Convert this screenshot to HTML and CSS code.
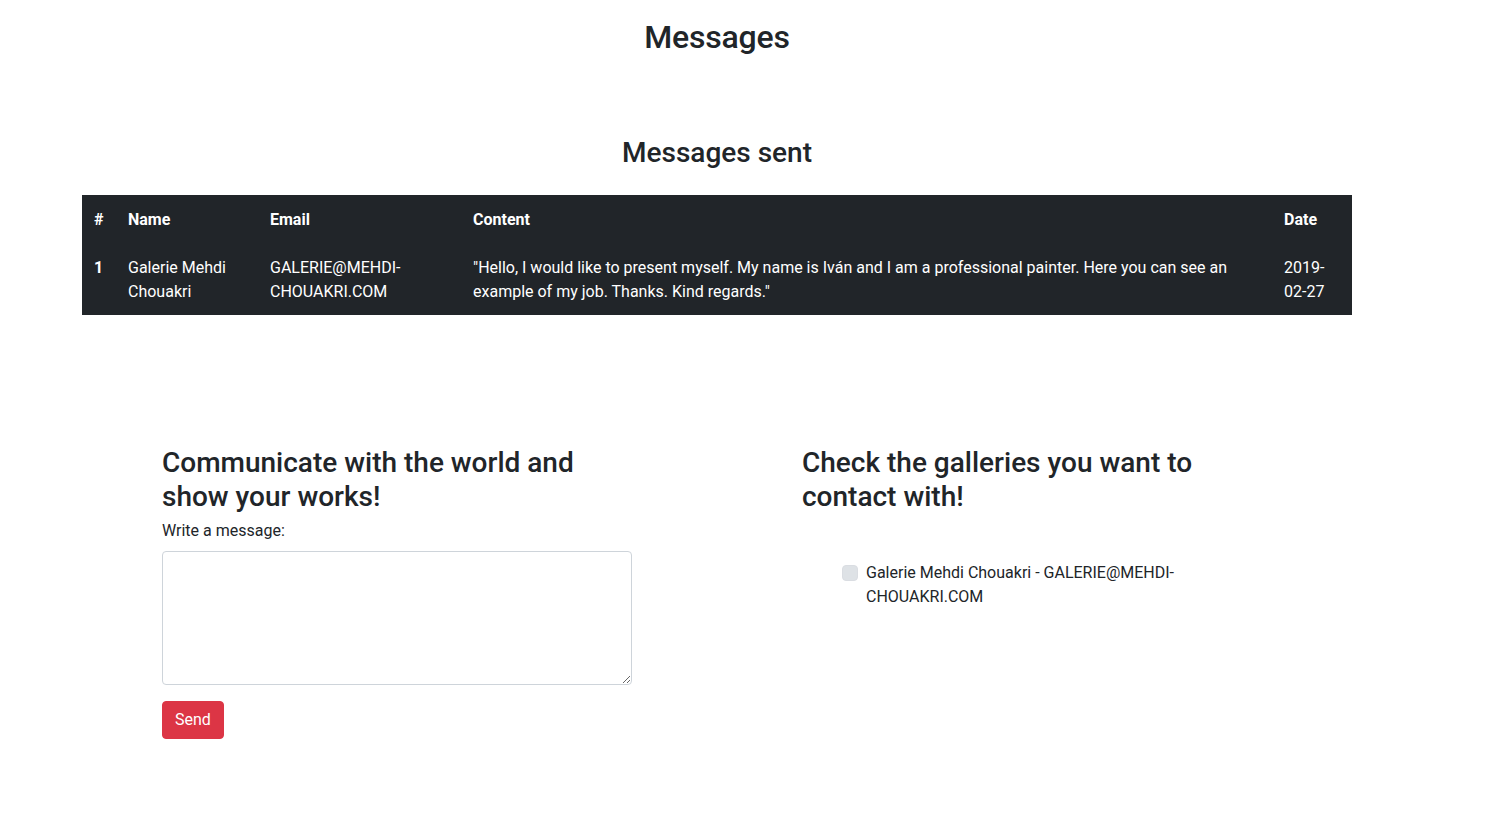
FILE: index.html
```
<!DOCTYPE html>
<html lang="en">
<head>
<meta charset="utf-8">
<title>Messages</title>
<link rel="stylesheet" href="styles.css">
</head>
<body>
<div class="page">
  <h2 class="title">Messages</h2>
  <h3 class="subtitle">Messages sent</h3>
  <table class="msg-table">
    <thead>
      <tr>
        <th class="c-num">#</th>
        <th class="c-name">Name</th>
        <th class="c-email">Email</th>
        <th class="c-content">Content</th>
        <th class="c-date">Date</th>
      </tr>
    </thead>
    <tbody>
      <tr>
        <th class="c-num">1</th>
        <td>Galerie Mehdi Chouakri</td>
        <td>GALERIE@MEHDI-CHOUAKRI.COM</td>
        <td>"Hello, I would like to present myself. My name is Iván and I am a professional painter. Here you can see an example of my job. Thanks. Kind regards."</td>
        <td>2019-02-27</td>
      </tr>
    </tbody>
  </table>

  <div class="lower">
    <form class="col col-left">
      <h3 class="col-title">Communicate with the world and show your works!</h3>
      <label class="form-label" for="msg">Write a message:</label>
      <textarea id="msg" class="form-control" rows="5"></textarea>
      <button type="button" class="btn-send">Send</button>
    </form>
    <div class="col col-right">
      <h3 class="col-title">Check the galleries you want to contact with!</h3>
      <div class="gallery-list">
        <div class="form-check">
          <input type="checkbox" class="check" id="g1">
          <label class="check-label" for="g1">Galerie Mehdi Chouakri - GALERIE@MEHDI-CHOUAKRI.COM</label>
        </div>
      </div>
    </div>
  </div>
</div>
</body>
</html>
```
FILE: styles.css
```
* { box-sizing: border-box; }
body {
  margin: 0;
  font-family: Roboto, "Liberation Sans", sans-serif;
  font-size: 16px;
  line-height: 1.5;
  color: #212529;
  background: #fff;
}
.page {
  width: 1434px;
}
.title {
  margin: 18px 0 0;
  text-align: center;
  font-size: 32px;
  font-weight: 500;
  line-height: 1.2;
  letter-spacing: -0.2px;
}
.subtitle {
  margin: 80px 0 0;
  text-align: center;
  font-size: 28px;
  font-weight: 500;
  line-height: 1.2;
}
.msg-table {
  margin: 25px 0 0 82px;
  width: 1270px;
  border-collapse: collapse;
  background: #212529;
  color: #fff;
  table-layout: fixed;
}
.msg-table th,
.msg-table td {
  padding: 13px 12px 11px;
  text-align: left;
  vertical-align: top;
}
.msg-table th { font-weight: 700; }
.msg-table td { font-weight: 400; }
.c-num { width: 34px; }
.c-name { width: 142px; }
.c-email { width: 203px; }
.c-content { width: 811px; }
.c-date { width: 80px; }

.lower {
  display: flex;
  gap: 170px;
  margin: 131px 0 0 162px;
}
.col {
  width: 470px;
  display: flex;
  flex-direction: column;
  align-items: flex-start;
}
.col-title {
  margin: 0 0 6px;
  font-size: 28px;
  font-weight: 500;
  line-height: 1.2;
}
.form-label {
  margin-bottom: 8px;
}
.form-control {
  width: 470px;
  height: 134px;
  padding: 6px 12px;
  border: 1px solid #ced4da;
  border-radius: 4px;
  font: inherit;
  color: #212529;
}
.btn-send {
  margin-top: 16px;
  padding: 6px 12px;
  border: 1px solid #dc3545;
  border-radius: 4px;
  background: #dc3545;
  color: #fff;
  font: inherit;
  line-height: 1.5;
}
.gallery-list {
  margin: 42px 0 0 40px;
}
.form-check {
  display: flex;
  align-items: flex-start;
  gap: 8px;
  width: 430px;
}
.check {
  appearance: none;
  -webkit-appearance: none;
  flex: none;
  width: 16px;
  height: 16px;
  margin: 4px 0 0;
  background: #dee2e6;
  border: 1px solid #dadde2;
  border-radius: 4px;
}
.check-label {
  width: 330px;
}
```
